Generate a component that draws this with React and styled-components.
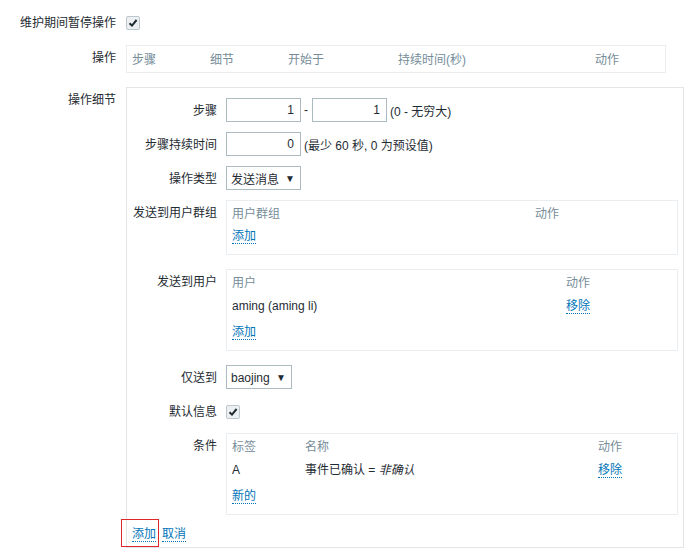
import React from 'react';
import styled, { createGlobalStyle } from 'styled-components';

const GlobalStyle = createGlobalStyle`
    body {
        margin: 0;
        background: #fff;
        font-family: "Liberation Sans", Arial, "Noto Sans CJK SC", sans-serif;
        font-size: 12px;
        color: #1f2c33;
    }
`;

const Form = styled.div`
    display: flex;
    flex-direction: column;
    padding-top: 10px;
`;

const Row = styled.div`
    display: grid;
    grid-template-columns: ${p => p.$labelWidth || 116}px 1fr;
    column-gap: ${p => p.$gap || 10}px;
    align-items: start;
    margin-bottom: ${p => p.$mb || 0}px;
`;

const Label = styled.div`
    text-align: right;
    line-height: 27px;
    height: 24px;
    white-space: nowrap;
`;

const Field = styled.div`
    display: flex;
    align-items: center;
    min-height: 24px;
    white-space: nowrap;
`;

const CheckBox = styled.span`
    display: inline-flex;
    align-items: center;
    justify-content: center;
    width: 12px;
    height: 12px;
    border: 1px solid #bcc7cd;
    border-radius: 2px;
    background: #edf0f2;
    margin-top: 1px;
`;

const Table = styled.table`
    width: ${p => p.$width || '100%'};
    table-layout: fixed;
    border: 1px solid #ebeef0;
    border-spacing: 0;
    box-sizing: border-box;

    th, td {
        text-align: left;
        font-weight: normal;
        line-height: 16px;
        padding: 5px 5px 2px;
        white-space: nowrap;
    }

    th {
        color: #768d99;
    }
`;

const OpsTable = styled(Table)`
    th {
        padding: 6px 5px 4px;
    }
`;

const DataCell = styled.td`
    && {
        padding: 5px 5px 6px;
    }
`;

const LinkCell = styled.td`
    && {
        padding: 4px 5px 10px;
    }
`;

const Link = styled.a`
    color: #0275b8;
    text-decoration: none;
    border-bottom: 1px dotted #0275b8;
    cursor: pointer;
`;

const DetailsBox = styled.div`
    width: 558px;
    box-sizing: border-box;
    border: 1px solid #e2e6e9;
    padding: 10px 5px 0 0;
`;

const NumInput = styled.input`
    width: 75px;
    height: 24px;
    box-sizing: border-box;
    border: 1px solid #acbbc2;
    padding: 0 6px;
    text-align: right;
    font: inherit;
    color: #1f2c33;
    background: #fff;
`;

const Dash = styled.span`
    margin: 0 4px 0 3px;
`;

const Hint = styled.span`
    margin-left: 3px;
`;

const Select = styled.div`
    display: flex;
    align-items: center;
    justify-content: space-between;
    width: ${p => p.$width}px;
    height: 24px;
    box-sizing: border-box;
    border: 1px solid #acbbc2;
    padding: 1px 5px 0 4px;
`;

const Caret = styled.span`
    font-size: 10px;
    color: #1f2c33;
`;

const Footer = styled.div`
    display: flex;
    align-items: center;
    height: 28px;
    padding-left: 5px;
`;

const Marked = styled.span`
    display: flex;
    align-items: center;
    height: 28px;
    box-sizing: border-box;
    border: 1px solid #e0262b;
    padding: 0 2px 0 10px;
    margin-left: -11px;
`;

const Cancel = styled(Link)`
    margin-left: 3px;
`;

const Tick = () => (
    <svg width="10" height="10" viewBox="0 0 10 10">
        <path d="M1.5 5.2 L4 7.6 L8.6 2" fill="none" stroke="#1f2c33" strokeWidth="2" />
    </svg>
);

const ListBox = ({ cols, head, rows, add }) => (
    <Table>
        <colgroup>
            {cols.map((w, i) => <col key={i} style={{ width: w }} />)}
        </colgroup>
        <thead>
            <tr>{head.map(h => <th key={h}>{h}</th>)}</tr>
        </thead>
        <tbody>
            {rows.map((r, i) => (
                <tr key={i}>
                    {r.map((c, j) => <DataCell key={j}>{c}</DataCell>)}
                </tr>
            ))}
            <tr>
                <LinkCell colSpan={head.length}><Link>{add}</Link></LinkCell>
            </tr>
        </tbody>
    </Table>
);

const App = () => (
    <>
        <GlobalStyle />
        <Form>
            <Row $mb={11}>
                <Label>维护期间暂停操作</Label>
                <Field><CheckBox><Tick /></CheckBox></Field>
            </Row>
            <Row $mb={14}>
                <Label>操作</Label>
                <OpsTable $width="540px">
                    <colgroup>
                        <col style={{ width: 78 }} />
                        <col style={{ width: 78 }} />
                        <col style={{ width: 110 }} />
                        <col style={{ width: 197 }} />
                        <col />
                    </colgroup>
                    <thead>
                        <tr>
                            <th>步骤</th>
                            <th>细节</th>
                            <th>开始于</th>
                            <th>持续时间(秒)</th>
                            <th>动作</th>
                        </tr>
                    </thead>
                </OpsTable>
            </Row>
            <Row>
                <Label>操作细节</Label>
                <DetailsBox>
                    <Row $labelWidth={90} $gap={9} $mb={10}>
                        <Label>步骤</Label>
                        <Field>
                            <NumInput defaultValue="1" />
                            <Dash>-</Dash>
                            <NumInput defaultValue="1" />
                            <Hint>(0 - 无穷大)</Hint>
                        </Field>
                    </Row>
                    <Row $labelWidth={90} $gap={9} $mb={10}>
                        <Label>步骤持续时间</Label>
                        <Field>
                            <NumInput defaultValue="0" />
                            <Hint>(最少 60 秒, 0 为预设值)</Hint>
                        </Field>
                    </Row>
                    <Row $labelWidth={90} $gap={9} $mb={10}>
                        <Label>操作类型</Label>
                        <Field>
                            <Select $width={75}>发送消息<Caret>▼</Caret></Select>
                        </Field>
                    </Row>
                    <Row $labelWidth={90} $gap={9} $mb={14}>
                        <Label>发送到用户群组</Label>
                        <ListBox cols={[303, null]} head={['用户群组', '动作']} rows={[]} add="添加" />
                    </Row>
                    <Row $labelWidth={90} $gap={9} $mb={14}>
                        <Label>发送到用户</Label>
                        <ListBox
                            cols={[334, null]}
                            head={['用户', '动作']}
                            rows={[['aming (aming li)', <Link>移除</Link>]]}
                            add="添加"
                        />
                    </Row>
                    <Row $labelWidth={90} $gap={9} $mb={10}>
                        <Label>仅送到</Label>
                        <Field>
                            <Select $width={66}>baojing<Caret>▼</Caret></Select>
                        </Field>
                    </Row>
                    <Row $labelWidth={90} $gap={9} $mb={10}>
                        <Label>默认信息</Label>
                        <Field><CheckBox><Tick /></CheckBox></Field>
                    </Row>
                    <Row $labelWidth={90} $gap={9} $mb={4}>
                        <Label>条件</Label>
                        <ListBox
                            cols={[73, 293, null]}
                            head={['标签', '名称', '动作']}
                            rows={[['A', <>事件已确认 = <i>非确认</i></>, <Link>移除</Link>]]}
                            add="新的"
                        />
                    </Row>
                    <Footer>
                        <Marked><Link>添加</Link></Marked>
                        <Cancel>取消</Cancel>
                    </Footer>
                </DetailsBox>
            </Row>
        </Form>
    </>
);

export default App;
